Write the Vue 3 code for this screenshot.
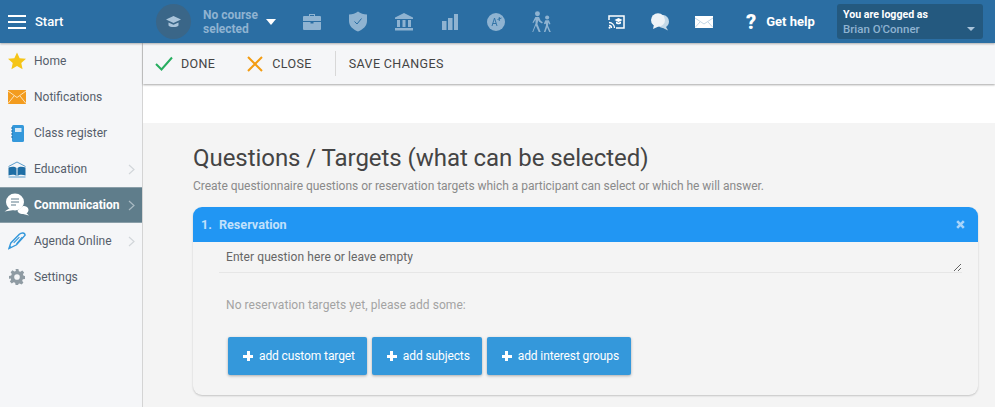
<template>
  <div class="app">
    <header class="topbar">
      <div class="start">
        <span class="burger"><i></i><i></i><i></i></span>
        <span class="start-label">Start</span>
      </div>
      <div class="course">
        <span class="cap-disc">
          <svg width="18" height="16" viewBox="0 0 18 16"><path d="M8.500 2 L16 5.500 L8.500 9 L1 5.500Z" fill="#a9c4da"/><path d="M3.500 8.500 L8.500 10.800 L13.500 8.500 V11.500 C12 13.500 5 13.500 3.500 11.500Z" fill="#a9c4da"/></svg>
        </span>
        <span class="course-label">No course<br>selected</span>
        <span class="caret"></span>
      </div>
      <nav class="dim-icons">
        <svg width="18" height="17" viewBox="0 0 18 17"><path d="M6 3V1h6v2h5a1 1 0 0 1 1 1v4H0V4a1 1 0 0 1 1-1zM7 2v1h4V2z" fill="#8fb3d1"/><path d="M0 9h7.500v1.500h3V9H18v7a1 1 0 0 1-1 1H1a1 1 0 0 1-1-1z" fill="#8fb3d1"/></svg>
        <svg width="18" height="21" viewBox="0 0 18 21"><path d="M9 0.500 C11.500 2.500 14.500 3.500 18 3.500 V10 C18 15 14 18.500 9 20.500 C4 18.500 0 15 0 10 V3.500 C3.500 3.500 6.500 2.500 9 0.500Z" fill="#8fb3d1"/><path d="M5.500 10.500l2.500 2.500L12.500 7.500" fill="none" stroke="#2b6ea3" stroke-width="1"/></svg>
        <svg width="18" height="18" viewBox="0 0 18 18"><path d="M9 0L18 4.500V6H0V4.500z M2 7h3v7H2z M7.500 7h3v7h-3z M13 7h3v7h-3z M0 15h18v2.500H0z" fill="#8fb3d1"/></svg>
        <svg class="bars" width="16" height="16" viewBox="0 0 16 16"><path d="M0 7h4.500v9H0z M6 4h4.500v12H6z M12 0h4v16h-4z" fill="#8fb3d1"/></svg>
        <svg class="grade" width="18" height="18" viewBox="0 0 18 18"><circle cx="9" cy="9" r="9" fill="#8fb3d1"/><path d="M5 13L7.500 5L10 13M5.800 10.500H9M10.500 6.500L14.500 5M12.300 4V8" fill="none" stroke="#2b6ea3" stroke-width="0.900"/></svg>
        <svg class="walk" width="21" height="21" viewBox="2 0 17.500 19.500" fill="#8fb3d1"><circle cx="7" cy="2.500" r="2.300"/><circle cx="16" cy="6" r="1.900"/><path d="M5 5.500h3.500l1.500 3.500 2 1.500-.8 1-2.700-1.500-.8-1.500-.7 3.500 3 7.500h-1.800l-2.700-6-2.500 6H2.200l3-8V8L3.500 11H2.300z"/><path d="M14.300 8.500h3.300l1.500 3.500-1 .5-1-1.800-.3 3 2.700 6h-1.500l-2-4.500-1.700 4.500h-1.400l2-6.200V11.500l-1.100.8-.8-.8z"/></svg>
      </nav>
      <nav class="bright-icons">
        <svg width="17" height="14" viewBox="0 0 17 14"><path d="M1 5V1h15v12H8" fill="none" stroke="#fff" stroke-width="1.500"/><path d="M1 7.500a5.500 5.500 0 0 1 5.500 5.500M1 10.500a2.500 2.500 0 0 1 2.500 2.500" fill="none" stroke="#fff" stroke-width="1.300"/><circle cx="1.500" cy="12.800" r="1" fill="#fff"/><path d="M10.500 3l4 2-4 2-4-2z M8 6.500l2.500 1.200 2.500-1.200v2c-1 1-4 1-5 0z" fill="#fff"/></svg>
        <svg width="18" height="18" viewBox="0 0 18 18"><ellipse cx="12" cy="8.500" rx="6" ry="6.500" fill="#c4d9e8"/><path d="M14.500 13L17 17.500L11 14.500Z" fill="#c4d9e8"/><ellipse cx="7" cy="7" rx="7" ry="6.800" fill="#eef3f7"/><path d="M3 11.500 L2 16 L7.500 13.500Z" fill="#eef3f7"/></svg>
        <svg width="18" height="12" viewBox="0 0 18 12"><rect width="18" height="12" fill="#fff"/><path d="M0 2L9 8L18 2M0 11.500L5 6M18 11.500L13 6" fill="none" stroke="#a9c4da" stroke-width="0.700"/></svg>
      </nav>
      <div class="help"><span class="q">?</span><span>Get help</span></div>
      <div class="user">
        <div class="user-top">You are logged as</div>
        <div class="user-name">Brian O'Conner</div>
        <span class="user-caret"></span>
      </div>
    </header>

    <div class="body">
      <aside class="sidebar">
        <a v-for="item in menu" :key="item.label" class="item" :class="{ active: item.active }">
          <span class="item-icon" v-html="item.icon"></span>
          <span class="item-label">{{ item.label }}</span>
          <svg v-if="item.arrow" class="chev" width="7" height="11" viewBox="0 0 7 11"><path d="M1 1l5 4.500-5 4.500" fill="none" :stroke="item.active ? '#a9bac3' : '#d2d6da'" stroke-width="1.200"/></svg>
        </a>
      </aside>

      <main class="main">
        <div class="toolbar">
          <button class="tool done">
            <svg width="18" height="15" viewBox="0 0 18 15"><path d="M1 8l5.500 5.500L17 1.500" fill="none" stroke="#27ae60" stroke-width="2"/></svg>
            DONE
          </button>
          <button class="tool close">
            <svg width="16" height="16" viewBox="0 0 16 16"><path d="M1 1l14 14M15 1L1 15" fill="none" stroke="#f39c12" stroke-width="2"/></svg>
            CLOSE
          </button>
          <span class="sep"></span>
          <button class="tool save">SAVE CHANGES</button>
        </div>
        <div class="white-strip"></div>
        <section class="content">
          <h1>Questions / Targets (what can be selected)</h1>
          <p class="sub">Create questionnaire questions or reservation targets which a participant can select or which he will answer.</p>
          <div class="card">
            <div class="card-head">
              <span class="num">1.</span>
              <span class="card-title">Reservation</span>
              <svg width="9" height="9" viewBox="0 0 9 9"><path d="M1.200 1.200l6.600 6.600M7.800 1.200L1.200 7.800" fill="none" stroke="#a8d4fa" stroke-width="2.600"/></svg>
            </div>
            <div class="card-body">
              <textarea class="question" placeholder="Enter question here or leave empty"></textarea>
              <p class="empty">No reservation targets yet, please add some:</p>
              <div class="buttons">
                <button v-for="b in buttons" :key="b" class="add"><span class="plus"></span>{{ b }}</button>
              </div>
            </div>
          </div>
        </section>
      </main>
    </div>
  </div>
</template>

<script setup>
const buttons = ['add custom target', 'add subjects', 'add interest groups']
const menu = [
  { label: 'Home', icon: '<svg width="18" height="18" viewBox="0 0 19 18"><path d="M9.500 0l2.800 6 6.700.7-5 4.500 1.400 6.600-5.900-3.400-5.900 3.400 1.400-6.600-5-4.500 6.700-.7z" fill="#f5c518"/></svg>' },
  { label: 'Notifications', icon: '<svg width="18" height="14" viewBox="0 0 18 14"><rect width="18" height="14" fill="#f39c1f"/><path d="M0 1l9 6.500L18 1M0 13.500l6-7.500M18 13.500l-6-7.500" fill="none" stroke="#fde3b8" stroke-width="1"/></svg>' },
  { label: 'Class register', icon: '<svg width="13" height="17" viewBox="0 0 13 17"><rect x="1" width="12" height="17" rx="1.500" fill="#3498db"/><rect x="4" y="3" width="6.500" height="4" fill="#d5e9f7"/><path d="M0 3h2M0 6h2M0 9h2M0 12h2" stroke="#1f6fa8" stroke-width="1"/></svg>' },
  { label: 'Education', arrow: true, icon: '<svg width="18" height="17" viewBox="0 0 18 17"><path d="M0.500 5.500L9 1L17.500 5.500" fill="none" stroke="#5a9ccb" stroke-width="1"/><path d="M0.500 6.500c3-1 6.500-1 8 .5v8c-1.500-1.500-5-1.500-8-.5z M17.500 6.500c-3-1-6.500-1-8 .5v8c1.500-1.500 5-1.500 8-.5z" fill="#1f6ea5"/><path d="M0.500 16h17" stroke="#5a9ccb" stroke-width="1"/></svg>' },
  { label: 'Communication', active: true, arrow: true, icon: '<svg width="26" height="25" viewBox="0 0 26 25"><ellipse cx="11" cy="9" rx="9" ry="8.500" fill="#fff"/><path d="M6 15L0.500 18.500L10 17Z" fill="#fff"/><path d="M7 6h8M7 9h8M7 12h5" stroke="#5f7d8b" stroke-width="1.200"/><path d="M19 13c3 0 5.500 1.300 5.500 4 0 1.500-1 2.600-2 3.200l2.500 2.300-6-1.500c-3 0-5.500-1.600-5.500-3.500z" fill="#fff"/></svg>' },
  { label: 'Agenda Online', arrow: true, icon: '<svg width="18" height="18" viewBox="0 0 19 18"><path d="M1 17l2-6L12 2c2-2 6-2 6 1l-9 10z" fill="none" stroke="#3498db" stroke-width="1.500"/><path d="M6 11l6-6M9 12l6-7" stroke="#3498db" stroke-width="1.200"/><path d="M1 17l3-1-1.500-2z" fill="#3498db"/></svg>' },
  { label: 'Settings', icon: '<svg width="16" height="16" viewBox="0 0 17 17"><path d="M7 0h3l.5 2.300 1.600.7 2-1.300 2 2-1.300 2 .7 1.600L17 7.500v3l-2.300.5-.7 1.600 1.300 2-2 2-2-1.300-1.600.7L10 17H7l-.5-2.300-1.600-.7-2 1.300-2-2 1.300-2-.7-1.600L0 10.500v-3l2.300-.5.7-1.600-1.300-2 2-2 2 1.300 1.600-.7z" fill="#8f9ba3"/><circle cx="8.500" cy="8.500" r="3" fill="#f5f6f8"/></svg>' }
]
</script>

<style>
html, body { margin: 0; background: #f4f4f4; }
</style>

<style scoped>
.app { width: 995px; height: 407px; overflow: hidden; font-family: Roboto, "Liberation Sans", sans-serif; display: flex; flex-direction: column; }
.topbar { height: 43px; background: #2b6ea3; display: flex; align-items: center; box-shadow: 0 1px 2px rgba(0,0,0,.3); position: relative; z-index: 3; flex: none; color: #fff; }
.start { width: 156px; display: flex; align-items: center; padding-left: 8px; gap: 9px; box-sizing: border-box; flex: none; }
.burger { display: flex; flex-direction: column; gap: 4px; width: 18px; }
.burger i { height: 2px; background: #fff; display: block; }
.start-label { font-size: 13px; font-weight: 500; }
.course { display: flex; align-items: center; width: 147px; flex: none; }
.cap-disc { width: 35px; height: 35px; border-radius: 50%; background: #3a6688; display: flex; align-items: center; justify-content: center; margin-right: 12px; flex: none; }
.course-label { color: #8fb3d1; font-size: 12px; font-weight: 700; line-height: 14px; width: 63px; }
.caret { width: 0; height: 0; border-left: 5.500px solid transparent; border-right: 5.500px solid transparent; border-top: 6px solid #fff; }
.dim-icons { display: flex; align-items: center; gap: 28px; width: 305px; flex: none; }
.bars { margin-left: 1px; }
.grade { margin-left: 1px; }
.walk { margin-left: -2px; }
.bright-icons { display: flex; align-items: center; gap: 26px; }
.help { display: flex; align-items: center; font-size: 13px; font-weight: 700; margin-left: 33px; gap: 10px; width: 91px; flex: none; }
.q { font-size: 20px; font-weight: 900; }
.user { width: 146px; height: 35px; background: #24597f; border-radius: 3px; position: relative; box-sizing: border-box; padding: 4px 6px; flex: none; }
.user-top { font-size: 10.600px; font-weight: 700; line-height: 14px; }
.user-name { font-size: 11.500px; font-weight: 500; color: #8fb3d1; line-height: 15px; }
.user-caret { position: absolute; right: 8px; bottom: 8px; border-left: 4px solid transparent; border-right: 4px solid transparent; border-top: 4px solid #a9c4da; }
.body { flex: 1; display: flex; min-height: 0; }
.sidebar { width: 143px; flex: none; background: #f5f6f8; border-right: 1px solid #d4d4d4; box-sizing: border-box; }
.item { height: 36px; display: flex; align-items: center; color: #555e6b; font-size: 12px; position: relative; }
.item-icon { width: 34px; display: flex; justify-content: center; flex: none; }
.item.active { background: #5f7d8b; color: #fff; font-weight: 700; border-top: 1px solid #8a9fa9; border-bottom: 1px solid #8a9fa9; box-sizing: border-box; }
.chev { position: absolute; right: 7px; top: 13px; }
.item.active .chev { top: 12px; }
.main { flex: 1; display: flex; flex-direction: column; min-width: 0; }
.toolbar { height: 41px; background: #f5f6f8; box-shadow: 0 1px 2px rgba(0,0,0,.35); display: flex; align-items: center; position: relative; z-index: 2; flex: none; }
.tool { background: none; border: 0; padding: 0; font: 12.500px Roboto, "Liberation Sans", sans-serif; color: #444; display: flex; align-items: center; letter-spacing: .37px; }
.done { margin-left: 12px; gap: 8px; }
.close { margin-left: 32px; gap: 9px; }
.sep { width: 1px; height: 25px; background: #d8d8d8; margin: 0 13px 0 23px; }
.white-strip { height: 39px; background: #fff; flex: none; }
.content { flex: 1; padding: 21px 17px 0 50px; background: #f4f4f4; }
h1 { margin: 0; font-size: 24px; font-weight: 400; line-height: 28px; color: #444; letter-spacing: -.05px; }
.sub { margin: 7px 0 0; font-size: 12px; color: #8a8a8a; line-height: 14px; letter-spacing: -.03px; }
.card { margin-top: 14px; border-radius: 9px; background: #f4f4f4; box-shadow: 0 1px 2px rgba(0,0,0,.2); height: 188px; }
.card-head { height: 35px; box-sizing: border-box; background: #2196f3; border-radius: 9px 9px 0 0; display: flex; align-items: center; color: #c2e1fb; font-size: 12.600px; font-weight: 700; padding: 0 13px 1px 8px; }
.num { width: 18px; }
.card-title { flex: 1; }
.card-body { padding: 0 16px 0 26px; }
.question { display: block; width: 100%; height: 31px; box-sizing: border-box; background: transparent; border: 0; border-bottom: 1px solid #e6e6e6; font: 12px Roboto, "Liberation Sans", sans-serif; letter-spacing: .08px; padding: 8px 7px 0; outline: 0; color: #555; }
.question::placeholder { color: #666; opacity: 1; }
.empty { margin: 25px 0 0 7px; font-size: 12px; color: #a3a3a3; line-height: 14px; letter-spacing: .07px; }
.buttons { display: flex; gap: 5px; margin: 25px 0 0 9px; }
.add { height: 38px; background: #3498db; color: #fff; border: 0; border-radius: 2px; box-shadow: 0 1px 3px rgba(0,0,0,.3); font: 12px Roboto, "Liberation Sans", sans-serif; letter-spacing: -.11px; padding: 0 12px 0 15px; display: flex; align-items: center; gap: 6px; }
.plus { width: 10px; height: 10px; background: linear-gradient(#fff,#fff) center/10px 3px no-repeat, linear-gradient(#fff,#fff) center/3px 10px no-repeat; }
</style>
